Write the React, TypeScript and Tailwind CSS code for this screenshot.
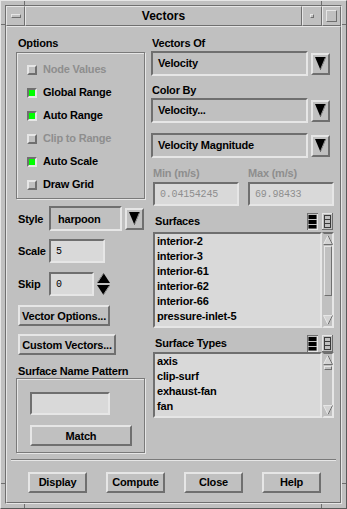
import React from "react";

const raised = "border-2 border-t-[#e6e6e6] border-l-[#e6e6e6] border-r-[#6f6f6f] border-b-[#6f6f6f]";
const raised1 = "border border-t-[#e6e6e6] border-l-[#e6e6e6] border-r-[#6f6f6f] border-b-[#6f6f6f]";
const sunken = "border-2 border-t-[#6f6f6f] border-l-[#6f6f6f] border-r-[#e6e6e6] border-b-[#e6e6e6]";
const etched = "border border-[#7a7a7a] shadow-[inset_1px_1px_0_#e6e6e6,1px_1px_0_#e6e6e6]";
const dim = "text-[#8e8e8e]";
const mono = "font-['Liberation_Mono',monospace] text-[10px] font-normal";

function DownArrow() {
  return (
    <div className={`w-[19px] h-[22px] shrink-0 ${raised} flex items-center justify-center`}>
      <svg width="11" height="13" viewBox="0 0 11 13">
        <polygon points="0,0 11,0 5.5,13" fill="#000" />
        <line x1="10.5" y1="0.5" x2="5.7" y2="12" stroke="#9a9a9a" />
      </svg>
    </div>
  );
}

function Check({ label, on, disabled }: { label: string; on?: boolean; disabled?: boolean }) {
  return (
    <div className="flex items-center h-[23px]">
      <span className={`w-[10px] h-[10px] shrink-0 ${on ? sunken + " bg-[#00ff00]" : raised}`} />
      <span className={`ml-[6px] ${disabled ? dim : ""}`}>{label}</span>
    </div>
  );
}

function Button({ label, w }: { label: string; w: string }) {
  return (
    <div className={`${w} h-[21px] ${raised} flex items-center justify-center`}>{label}</div>
  );
}

function Dropdown({ value }: { value: string }) {
  return (
    <div className="flex items-center h-[25px]">
      <div className={`w-[157px] h-[25px] ${sunken} flex items-center pl-[5px]`}>{value}</div>
      <div className="ml-[3px]">
        <DownArrow />
      </div>
    </div>
  );
}

function ListIcons() {
  return (
    <div className="flex items-center gap-[4px]">
      <svg width="11" height="17" viewBox="0 0 11 17">
        <rect x="0" y="0" width="11" height="17" fill="#6f6f6f" />
        <rect x="1" y="1" width="10" height="16" fill="#e6e6e6" />
        <rect x="1" y="1" width="9" height="15" fill="#c0c0c0" />
        <rect x="1.5" y="2" width="8" height="4" fill="#000" />
        <rect x="1.5" y="7" width="8" height="4" fill="#000" />
        <rect x="1.5" y="12" width="8" height="3.5" fill="#000" />
      </svg>
      <svg width="11" height="17" viewBox="0 0 11 17">
        <rect x="0" y="0" width="11" height="17" fill="#6f6f6f" />
        <rect x="0" y="0" width="10" height="16" fill="#e6e6e6" />
        <rect x="1" y="1" width="9" height="15" fill="#c0c0c0" />
        <rect x="2.5" y="2.5" width="6" height="12" fill="none" stroke="#3a3a3a" />
        <line x1="2.5" y1="6.5" x2="8.5" y2="6.5" stroke="#3a3a3a" />
        <line x1="2.5" y1="10.5" x2="8.5" y2="10.5" stroke="#3a3a3a" />
      </svg>
    </div>
  );
}

function ScrollArrow({ up }: { up?: boolean }) {
  return (
    <svg width="10" height="10" viewBox="0 0 10 10" className="shrink-0">
      {up ? (
        <>
          <polygon points="5,0.5 9.5,9.5 0.5,9.5" fill="#d4d4d4" stroke="#e6e6e6" />
          <line x1="0.5" y1="9.5" x2="9.5" y2="9.5" stroke="#6f6f6f" />
          <line x1="5" y1="0.5" x2="9.5" y2="9.5" stroke="#6f6f6f" />
        </>
      ) : (
        <>
          <polygon points="0.5,0.5 9.5,0.5 5,9.5" fill="#d4d4d4" stroke="#e6e6e6" />
          <line x1="9.5" y1="0.5" x2="5" y2="9.5" stroke="#6f6f6f" />
        </>
      )}
    </svg>
  );
}

function ListBox({ items, h, thumb }: { items: string[]; h: string; thumb: string }) {
  return (
    <div className={`flex ${h} ml-[2px]`}>
      <div className={`w-[169px] ${sunken} bg-[#d9d9d9] pl-[2px] overflow-hidden`}>
        {items.map((t) => (
          <div key={t} className="h-[15px] leading-[15px]">
            {t}
          </div>
        ))}
      </div>
      <div className={`w-[12px] ${sunken} border-l-[#c0c0c0] flex flex-col items-center py-[1px]`}>
        <ScrollArrow up />
        <div className={`w-[8px] ${thumb} mt-[1px] ${raised1}`} />
        <div className="flex-1" />
        <ScrollArrow />
      </div>
    </div>
  );
}

export default function App() {
  return (
    <div className="relative w-[347px] h-[509px] bg-[#c0c0c0] border border-t-[#e6e6e6] border-l-[#e6e6e6] border-r-[#5a5a5a] border-b-[#5a5a5a] p-[4px] font-['Liberation_Sans',Arial,sans-serif] font-bold text-[11px] tracking-[-0.2px] text-black">
      {/* frame corner marks */}
      <div className="absolute left-[23px] top-0 w-[1px] h-[4px] bg-[#6f6f6f]" />
      <div className="absolute left-[320px] top-0 w-[1px] h-[4px] bg-[#6f6f6f]" />
      <div className="absolute left-0 top-[23px] w-[4px] h-[1px] bg-[#6f6f6f]" />
      <div className="absolute right-0 top-[23px] w-[4px] h-[1px] bg-[#6f6f6f]" />
      <div className="absolute left-[23px] bottom-0 w-[1px] h-[4px] bg-[#6f6f6f]" />
      <div className="absolute left-[320px] bottom-0 w-[1px] h-[4px] bg-[#6f6f6f]" />
      <div className="absolute left-0 top-[482px] w-[4px] h-[1px] bg-[#6f6f6f]" />
      <div className="absolute right-0 top-[482px] w-[4px] h-[1px] bg-[#6f6f6f]" />

      <div className="h-full border border-t-[#6f6f6f] border-l-[#6f6f6f] border-r-[#e6e6e6] border-b-[#e6e6e6] flex flex-col">
        {/* title bar */}
        <div className="flex h-[20px] shrink-0">
          <div className={`w-[19px] ${raised1} flex items-center justify-center`}>
            <div className={`w-[10px] h-[4px] ${raised1}`} />
          </div>
          <div className={`flex-1 ${raised1} flex items-center justify-center text-[12px] tracking-normal`}>Vectors</div>
          <div className={`w-[20px] ${raised1} flex items-center justify-center`}>
            <div className={`w-[4px] h-[4px] ${raised1}`} />
          </div>
          <div className={`w-[19px] ${raised1} flex items-center justify-center`}>
            <div className={`w-[11px] h-[12px] ${raised1}`} />
          </div>
        </div>

        {/* content */}
        <div className={`flex-1 ${raised1} flex flex-col`}>
          <div className="flex h-[426px] pl-[9px] pt-[9px]">
            {/* left column */}
            <div className="w-[129px] flex flex-col">
              <div className="h-[14px] leading-[14px] ml-[2px]">Options</div>
              <div className={`mt-[2px] h-[148px] ${etched} pl-[10px] pt-[5px]`}>
                <Check label="Node Values" disabled />
                <Check label="Global Range" on />
                <Check label="Auto Range" on />
                <Check label="Clip to Range" disabled />
                <Check label="Auto Scale" on />
                <Check label="Draw Grid" />
              </div>

              <div className="mt-[7px] h-[25px] flex items-center ml-[2px]">
                <span className="w-[31px]">Style</span>
                <div className={`w-[73px] h-[25px] ${sunken} flex items-center pl-[7px]`}>harpoon</div>
                <div className="ml-[3px]">
                  <DownArrow />
                </div>
              </div>

              <div className="mt-[8px] h-[24px] flex items-center ml-[2px]">
                <span className="w-[31px]">Scale</span>
                <div className={`w-[56px] h-[24px] ${sunken} bg-[#d9d9d9] flex items-center pl-[5px] ${mono}`}>5</div>
              </div>

              <div className="mt-[9px] h-[24px] flex items-center ml-[2px]">
                <span className="w-[31px]">Skip</span>
                <div className={`w-[45px] h-[24px] ${sunken} bg-[#d9d9d9] flex items-center pl-[5px] ${mono}`}>0</div>
                <div className="ml-[3px] flex flex-col gap-[2px]">
                  <svg width="13" height="10" viewBox="0 0 13 10">
                    <polygon points="6.5,0 13,10 0,10" fill="#000" />
                    <line x1="6.5" y1="0.5" x2="0.5" y2="9.5" stroke="#9a9a9a" />
                  </svg>
                  <svg width="13" height="10" viewBox="0 0 13 10">
                    <polygon points="0,0 13,0 6.5,10" fill="#000" />
                    <line x1="12.5" y1="0.5" x2="6.5" y2="9.5" stroke="#9a9a9a" />
                  </svg>
                </div>
              </div>

              <div className="mt-[9px] ml-[2px]">
                <Button label="Vector Options..." w="w-[92px]" />
              </div>
              <div className="mt-[8px] ml-[2px]">
                <Button label="Custom Vectors..." w="w-[98px]" />
              </div>

              <div className="mt-[9px] h-[14px] leading-[14px] ml-[2px]">Surface Name Pattern</div>
              <div className={`h-[75px] ${etched} pl-[13px] pt-[13px]`}>
                <div className={`w-[80px] h-[23px] ${sunken} bg-[#d9d9d9]`} />
                <div className="mt-[10px]">
                  <Button label="Match" w="w-[102px]" />
                </div>
              </div>
            </div>

            {/* right column */}
            <div className="ml-[6px] w-[183px] flex flex-col">
              <div className="h-[14px] leading-[14px] ml-[1px]">Vectors Of</div>
              <div className="mt-[1px]">
                <Dropdown value="Velocity" />
              </div>
              <div className="mt-[7px] h-[14px] leading-[14px] ml-[1px]">Color By</div>
              <div className="mt-[1px]">
                <Dropdown value="Velocity..." />
              </div>
              <div className="mt-[10px]">
                <Dropdown value="Velocity Magnitude" />
              </div>

              <div className={`mt-[8px] h-[14px] leading-[14px] flex ${dim}`}>
                <span className="ml-[2px] w-[95px]">Min (m/s)</span>
                <span>Max (m/s)</span>
              </div>
              <div className="mt-[2px] flex h-[24px]">
                <div className={`ml-[2px] w-[86px] ${sunken} bg-[#d9d9d9] flex items-center pl-[5px] ${mono} ${dim}`}>0.04154245</div>
                <div className={`ml-[9px] w-[86px] ${sunken} bg-[#d9d9d9] flex items-center pl-[5px] ${mono} ${dim}`}>69.98433</div>
              </div>

              <div className="mt-[6px] h-[18px] flex items-center justify-between pr-[1px]">
                <span className="ml-[4px]">Surfaces</span>
                <ListIcons />
              </div>
              <div className="mt-[2px]">
                <ListBox
                  h="h-[96px]"
                  thumb="h-[50px]"
                  items={["interior-2", "interior-3", "interior-61", "interior-62", "interior-66", "pressure-inlet-5"]}
                />
              </div>

              <div className="mt-[6px] h-[18px] flex items-center justify-between pr-[1px]">
                <span className="ml-[4px]">Surface Types</span>
                <ListIcons />
              </div>
              <div>
                <ListBox h="h-[66px]" thumb="h-[4px]" items={["axis", "clip-surf", "exhaust-fan", "fan"]} />
              </div>
            </div>
          </div>

          {/* separator */}
          <div className="mt-[6px] mx-[4px] h-[2px] border-t border-t-[#7a7a7a] border-b border-b-[#e6e6e6]" />

          {/* action buttons */}
          <div className="mt-[11px] flex pl-[21px] gap-[19px]">
            <Button label="Display" w="w-[59px]" />
            <Button label="Compute" w="w-[59px]" />
            <Button label="Close" w="w-[59px]" />
            <Button label="Help" w="w-[59px]" />
          </div>
        </div>
      </div>
    </div>
  );
}
